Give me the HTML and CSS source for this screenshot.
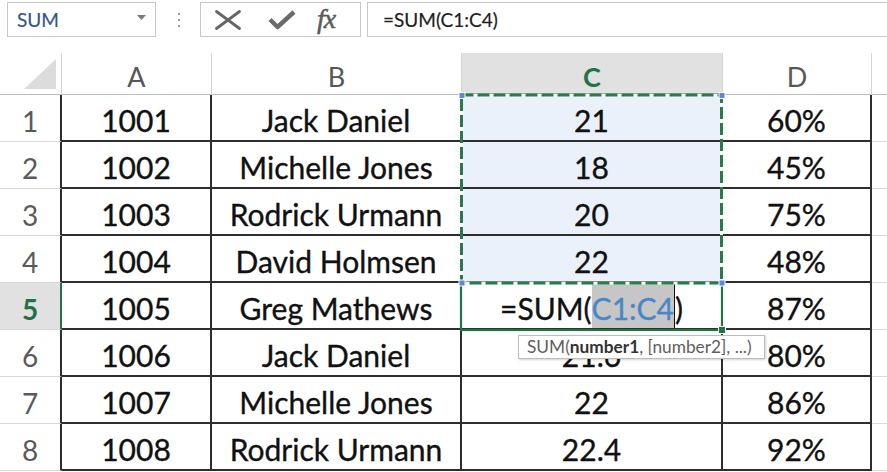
FILE: index.html
```html
<!DOCTYPE html>
<html>
<head>
<meta charset="utf-8">
<link rel="stylesheet" href="styles.css">
</head>
<body>
<div class="fbar">
  <div class="namebox"><span>SUM</span><svg class="arrow" width="9" height="5" viewBox="0 0 9 5"><path d="M0 0H9L4.5 5Z" fill="#7a7a7a"/></svg></div>
  <div class="sep"><svg width="4" height="16" viewBox="0 0 4 16"><circle cx="2" cy="2" r="1.2" fill="#a0a0a0"/><circle cx="2" cy="8" r="1.2" fill="#a0a0a0"/><circle cx="2" cy="14" r="1.2" fill="#a0a0a0"/></svg></div>
  <div class="btns">
    <svg class="ico-x" width="26" height="20" viewBox="0 0 26 20"><path d="M1.5 1.5L24.5 18.5M24.5 1.5L1.5 18.5" stroke="#666" stroke-width="2.8" fill="none" stroke-linecap="round"/></svg>
    <svg class="ico-ok" width="28" height="20" viewBox="0 0 28 20"><path d="M2 9.5L9.5 17L26 2" stroke="#6a6a6a" stroke-width="4.4" fill="none" stroke-linejoin="round"/></svg>
    <span class="fx">fx</span>
  </div>
  <div class="formula">=SUM(C1:C4)</div>
</div>
<div class="sheet">
  <div class="corner"><svg width="32" height="30" viewBox="0 0 32 30"><path d="M32 0V30H0Z" fill="#dcdcdc"/></svg></div>
  <div class="ch">A</div><div class="ch">B</div><div class="ch cur">C</div><div class="ch">D</div><div class="ch last"></div>

  <div class="rh">1</div><div class="cell">1001</div><div class="cell">Jack Daniel</div><div class="cell sel">21</div><div class="cell">60%</div><div class="ext"></div>
  <div class="rh">2</div><div class="cell">1002</div><div class="cell">Michelle Jones</div><div class="cell sel">18</div><div class="cell">45%</div><div class="ext"></div>
  <div class="rh">3</div><div class="cell">1003</div><div class="cell">Rodrick Urmann</div><div class="cell sel">20</div><div class="cell">75%</div><div class="ext"></div>
  <div class="rh">4</div><div class="cell">1004</div><div class="cell">David Holmsen</div><div class="cell sel">22</div><div class="cell">48%</div><div class="ext"></div>
  <div class="rh cur">5</div><div class="cell">1005</div><div class="cell">Greg Mathews</div><div class="cell act"><span>=SUM(</span><span class="ref">C1:C4</span><span>)</span></div><div class="cell">87%</div><div class="ext"></div>
  <div class="rh">6</div><div class="cell">1006</div><div class="cell">Jack Daniel</div><div class="cell">21.6</div><div class="cell">80%</div><div class="ext"></div>
  <div class="rh">7</div><div class="cell">1007</div><div class="cell">Michelle Jones</div><div class="cell">22</div><div class="cell">86%</div><div class="ext"></div>
  <div class="rh">8</div><div class="cell">1008</div><div class="cell">Rodrick Urmann</div><div class="cell">22.4</div><div class="cell">92%</div><div class="ext"></div>

  <svg class="overlay" width="887" height="419" viewBox="0 0 887 419">
    <rect x="461" y="230" width="261" height="47" fill="none" stroke="#217346" stroke-width="2.2"/>
    <rect x="461.5" y="42" width="260" height="188" fill="none" stroke="#ffffff" stroke-width="3"/>
    <rect x="461.5" y="42" width="260" height="188" fill="none" stroke="#2a7a4b" stroke-width="3" stroke-dasharray="12 4"/>
    <rect x="459" y="39.5" width="6" height="6" fill="#5b8ad8" stroke="#fff" stroke-width="1"/>
    <rect x="719" y="39.5" width="6" height="6" fill="#5b8ad8" stroke="#fff" stroke-width="1"/>
    <rect x="459" y="227" width="6" height="6" fill="#5b8ad8" stroke="#fff" stroke-width="1"/>
    <rect x="719" y="227" width="6" height="6" fill="#5b8ad8" stroke="#fff" stroke-width="1"/>
    <rect x="718.5" y="273.5" width="7" height="7" fill="#217346" stroke="#fff" stroke-width="1"/>
  </svg>
  <div class="tip">SUM(<b>number1</b>, [number2], ...)</div>
</div>
</body>
</html>
```
FILE: styles.css
```css
html, body {
  margin: 0;
  padding: 0;
  background: #ffffff;
}
body {
  font-family: Lato, "Open Sans", sans-serif;
  width: 887px;
  height: 472px;
  overflow: hidden;
}
.fbar {
  height: 53px;
  box-sizing: border-box;
  padding-top: 2px;
  display: flex;
  align-items: flex-start;
}
.namebox {
  margin-left: 7px;
  width: 149px;
  height: 35px;
  box-sizing: border-box;
  border: 1px solid #c8c8c8;
  display: flex;
  align-items: center;
  justify-content: space-between;
  padding: 0 9px 0 9px;
  color: #34568c;
  font-size: 19px;
  -webkit-text-stroke: 0.2px currentColor;
}
.namebox .arrow {
  margin-top: -4px;
}
.sep {
  width: 44px;
  height: 35px;
  display: flex;
  align-items: center;
  justify-content: center;
  padding-left: 2px;
  box-sizing: border-box;
}
.btns {
  width: 161px;
  height: 35px;
  box-sizing: border-box;
  border: 1px solid #c8c8c8;
  display: flex;
  align-items: center;
  padding-left: 14px;
}
.ico-ok { margin-left: 27px; margin-top: 1px; }
.fx {
  margin-left: 21px;
  font-family: "Liberation Serif", "DejaVu Serif", serif;
  font-style: italic;
  font-size: 28px;
  color: #5a5a5a;
  letter-spacing: -1px;
  line-height: 1;
  margin-top: -2px;
  -webkit-text-stroke: 0.5px currentColor;
}
.formula {
  flex: 1;
  margin-left: 6px;
  margin-right: -2px;
  height: 35px;
  box-sizing: border-box;
  border: 1px solid #c8c8c8;
  padding-left: 15px;
  font-size: 19px;
  line-height: 33px;
  color: #1e1e1e;
  -webkit-text-stroke: 0.2px currentColor;
}
.sheet {
  position: relative;
  display: grid;
  grid-template-columns: 62px 150px 250px 261px 149px 15px;
  grid-template-rows: 42px repeat(8, 47px);
}
.sheet > div {
  box-sizing: border-box;
}
.corner {
  border-right: 1px solid #d4d4d4;
  border-bottom: 1px solid #bdbdbd;
  display: flex;
  align-items: flex-end;
  justify-content: flex-end;
  padding: 0 5px 5px 0;
}
.corner svg { display: block; }
.ch {
  border-right: 1px solid #d4d4d4;
  border-bottom: 1px solid #bdbdbd;
  display: flex;
  align-items: flex-end;
  justify-content: center;
  padding-bottom: 4px;
  font-size: 27px;
  line-height: 1;
  color: #575757;
}
.ch.cur {
  background: #e1e1e1;
  color: #217346;
  font-weight: 700;
  border-bottom: 2px solid #217346;
  padding-bottom: 3px;
}
.ch.last { border-right: none; }
.rh {
  border-right: 2px solid #2e2e2e;
  border-bottom: 1px solid #d8d8d8;
  display: flex;
  align-items: center;
  justify-content: center;
  padding-top: 5px;
  font-size: 28px;
  color: #5a5a5a;
}
.rh.cur {
  background: #e1e1e1;
  color: #217346;
  font-weight: 700;
  border-right-color: #217346;
}
.cell {
  border-right: 2px solid #2e2e2e;
  border-bottom: 2px solid #2e2e2e;
  display: flex;
  align-items: center;
  justify-content: center;
  padding-top: 5px;
  font-size: 30px;
  color: #111;
  white-space: nowrap;
  -webkit-text-stroke: 0.35px currentColor;
}
.cell.sel { background: #ebf1fb; }
.cell.act {
  padding-top: 0;
  align-items: stretch;
}
.cell.act span {
  display: block;
  line-height: 36px;
  padding-top: 7px;
}
.cell.act .ref {
  background: #c6c6c6;
  color: #4a87c9;
  border-right: 1px solid #111;
}
.ext {
  border-bottom: 1px solid #dadada;
}
.overlay {
  position: absolute;
  left: 0;
  top: 0;
  pointer-events: none;
}
.tip {
  position: absolute;
  left: 518px;
  top: 282px;
  width: 247px;
  height: 24px;
  box-sizing: border-box;
  background: #fff;
  border: 1px solid #bcbcbc;
  box-shadow: 1px 1px 2px rgba(0,0,0,0.18);
  padding-left: 8px;
  font-size: 17.3px;
  line-height: 21px;
  color: #5e5e5e;
  white-space: nowrap;
}
.tip b { color: #333; font-weight: 700; }
```
